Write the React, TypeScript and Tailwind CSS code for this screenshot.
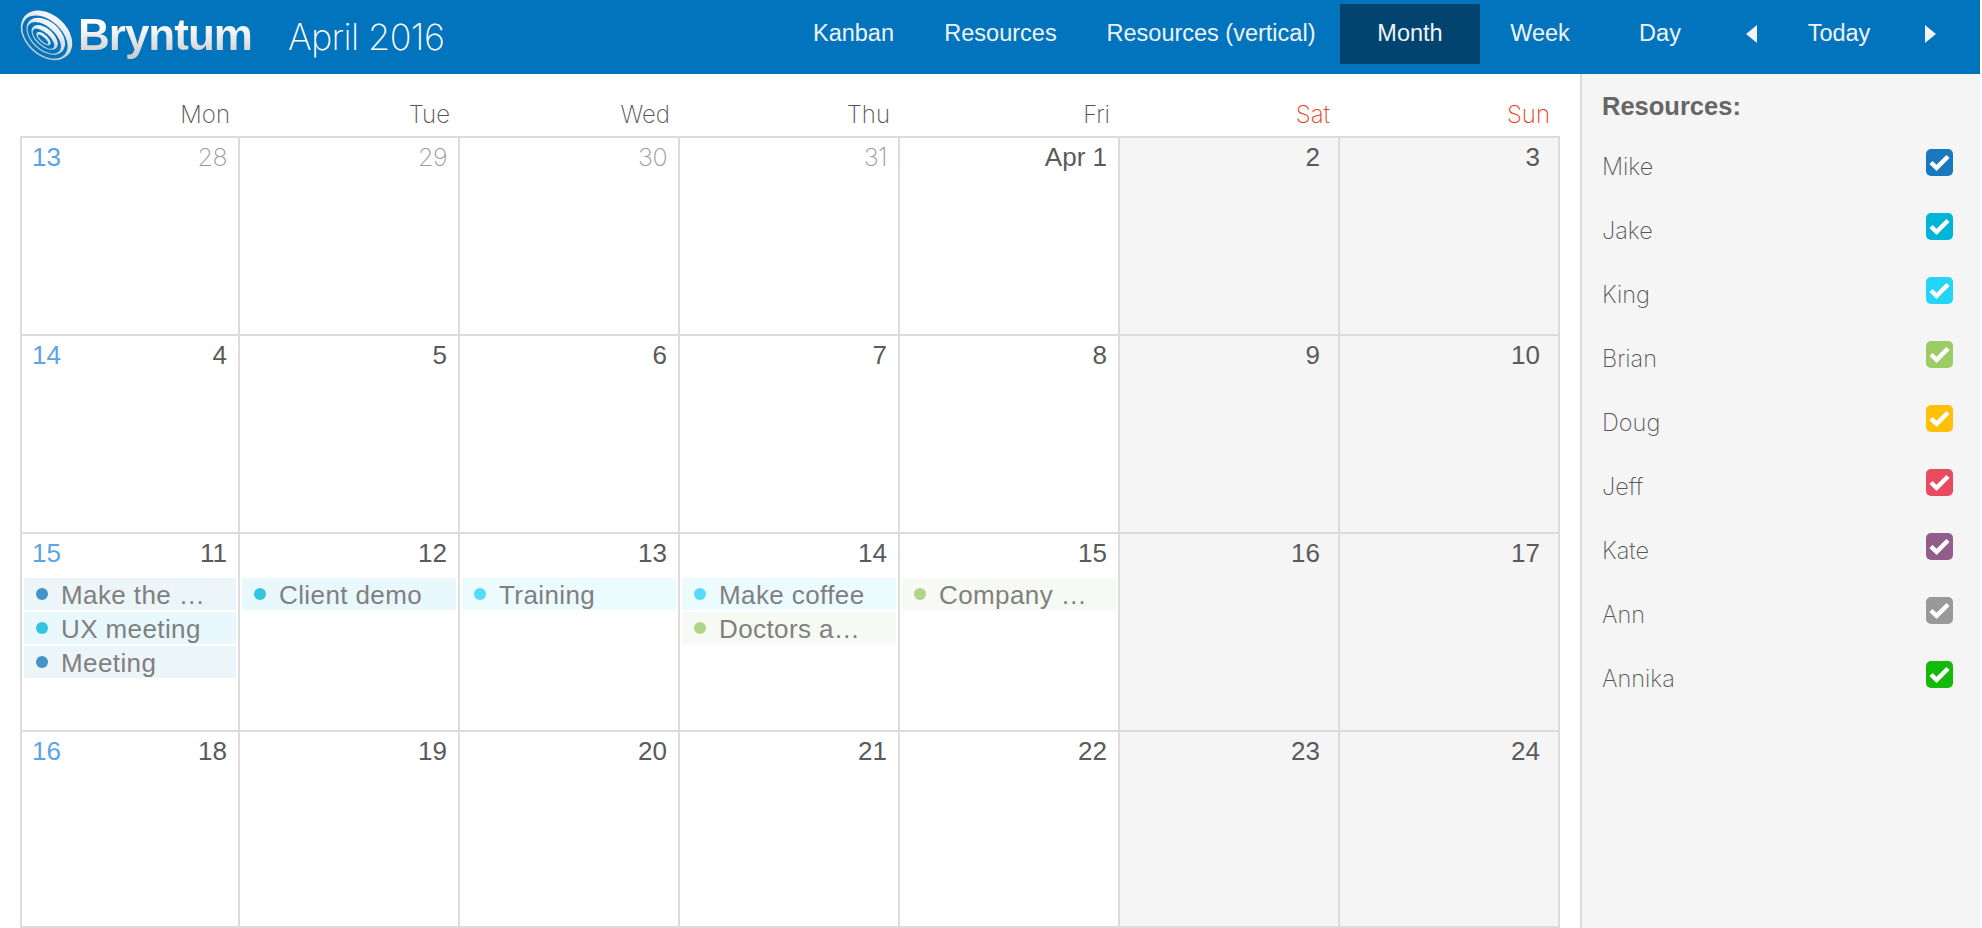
const WEEKS = [
  { week: 13, days: ["28", "29", "30", "31", "Apr 1", "2", "3"] },
  { week: 14, days: ["4", "5", "6", "7", "8", "9", "10"] },
  { week: 15, days: ["11", "12", "13", "14", "15", "16", "17"] },
  { week: 16, days: ["18", "19", "20", "21", "22", "23", "24"] },
];

const DAY_NAMES = ["Mon", "Tue", "Wed", "Thu", "Fri", "Sat", "Sun"];

const BLUE = { dot: "bg-[#4392c8]", bg: "bg-[#ecf5f8]" };
const CYAN = { dot: "bg-[#33c4e0]", bg: "bg-[#e9f8fc]" };
const SKY = { dot: "bg-[#55daf9]", bg: "bg-[#ecfbfe]" };
const GREEN = { dot: "bg-[#b0d489]", bg: "bg-[#f7faf4]" };

// events keyed by "weekIndex-dayIndex"
const EVENTS: Record<string, { title: string; color: { dot: string; bg: string } }[]> = {
  "2-0": [
    { title: "Make the …", color: BLUE },
    { title: "UX meeting", color: CYAN },
    { title: "Meeting", color: BLUE },
  ],
  "2-1": [{ title: "Client demo", color: CYAN }],
  "2-2": [{ title: "Training", color: SKY }],
  "2-3": [
    { title: "Make coffee", color: SKY },
    { title: "Doctors a…", color: GREEN },
  ],
  "2-4": [{ title: "Company …", color: GREEN }],
};

const RESOURCES = [
  { name: "Mike", color: "bg-[#1a78bf]" },
  { name: "Jake", color: "bg-[#00b4d8]" },
  { name: "King", color: "bg-[#25d5f8]" },
  { name: "Brian", color: "bg-[#9ccc65]" },
  { name: "Doug", color: "bg-[#ffc107]" },
  { name: "Jeff", color: "bg-[#e84a5f]" },
  { name: "Kate", color: "bg-[#915e8c]" },
  { name: "Ann", color: "bg-[#999999]" },
  { name: "Annika", color: "bg-[#15b90a]" },
];

function Logo() {
  return (
    <div className="flex items-center">
      <svg width="56" height="56" viewBox="0 0 50 50" className="mt-[-1px] ml-[-3px]">
        <defs>
          <linearGradient id="swirl" x1="0" y1="0" x2="0.3" y2="1">
            <stop offset="0" stopColor="#ffffff" />
            <stop offset="1" stopColor="#bcc6ce" />
          </linearGradient>
        </defs>
        {/* offset ellipses give each ring its crescent shape */}
        <g transform="rotate(42 25 25)" fill="url(#swirl)" fillRule="evenodd">
          <path d="M-1 23a26 18.5 0 1 0 52 0a26 18.5 0 1 0 -52 0ZM1.5 25a23.5 15 0 1 0 47 0a23.5 15 0 1 0 -47 0Z" />
          <path d="M5 24a20 13 0 1 0 40 0a20 13 0 1 0 -40 0ZM7 26a18 9.8 0 1 0 36 0a18 9.8 0 1 0 -36 0Z" />
          <path d="M11 25.5a14 8 0 1 0 28 0a14 8 0 1 0 -28 0ZM13 27a12 5.3 0 1 0 24 0a12 5.3 0 1 0 -24 0Z" />
          <path d="M17 27a8 3.6 0 1 0 16 0a8 3.6 0 1 0 -16 0ZM19 27.6a6 1.8 0 1 0 12 0a6 1.8 0 1 0 -12 0Z" />
        </g>
      </svg>
      <span className="mt-[-4px] ml-[5px] bg-gradient-to-b from-white from-30% to-[#c4c4c4] bg-clip-text font-['Liberation_Sans',sans-serif] text-[44px] leading-[54px] font-bold tracking-[-1px] text-transparent">
        Bryntum
      </span>
    </div>
  );
}

function NavItem({ label, className }: { label: string; className: string }) {
  return <div className={`flex h-[60px] items-center justify-center ${className}`}>{label}</div>;
}

function Header() {
  return (
    <header className="flex h-[74px] w-[1980px] items-center bg-[#0273bd] pl-[20px] text-white">
      <Logo />
      <div className="ml-[36px] font-['Inter',sans-serif] text-[36px] font-extralight tracking-[-0.6px]">April 2016</div>
      <nav className="mb-[6px] ml-auto flex items-center font-['Liberation_Sans',sans-serif] text-[23.5px] text-[#eef4fa]">
        <NavItem label="Kanban" className="w-[131px]" />
        <NavItem label="Resources" className="w-[163px]" />
        <NavItem label="Resources (vertical)" className="w-[258px]" />
        <NavItem label="Month" className="w-[140px] bg-[#02436f]" />
        <NavItem label="Week" className="w-[120px]" />
        <NavItem label="Day" className="w-[120px]" />
        <div className="flex h-[60px] w-[62px] items-center justify-center">
          <div className="h-0 w-0 border-y-[9px] border-r-[11px] border-y-transparent border-r-[#eef4fa]" />
        </div>
        <NavItem label="Today" className="w-[114px]" />
        <div className="flex h-[60px] w-[68px] items-center justify-center">
          <div className="h-0 w-0 border-y-[9px] border-l-[11px] border-y-transparent border-l-[#eef4fa]" />
        </div>
        <div className="w-[16px]" />
      </nav>
    </header>
  );
}

function DayCell({ weekIndex, dayIndex, label, week }: { weekIndex: number; dayIndex: number; label: string; week: number }) {
  const isWeekend = dayIndex >= 5;
  const isOtherMonth = weekIndex === 0 && dayIndex < 4;
  const events = EVENTS[`${weekIndex}-${dayIndex}`] ?? [];

  return (
    <div className={`border-t-2 border-l-2 border-[#dcdcdc] ${isWeekend ? "bg-[#f5f5f5]" : "bg-white"}`}>
      <div className={`flex h-[40px] items-start pt-[2px] text-[26px] leading-[34px] ${isWeekend ? "pr-[18px]" : "pr-[11px]"}`}>
        {dayIndex === 0 && <span className="ml-[10px] text-[#5ba4e5]">{week}</span>}
        <span
          className={`ml-auto ${
            isOtherMonth ? "font-['Inter',sans-serif] text-[25px] font-extralight tracking-[-0.5px] text-[#9a9a9a]" : "text-[#5a5a5a]"
          }`}
        >
          {label}
        </span>
      </div>
      <div className="mt-[4px] flex flex-col gap-[2px] px-[2px]">
        {events.map((ev) => (
          <div key={ev.title} className={`flex h-[32px] items-center pl-[12px] ${ev.color.bg}`}>
            <span className={`h-[12px] w-[12px] rounded-full ${ev.color.dot}`} />
            <span className="mt-[1px] ml-[13px] font-['Liberation_Sans',sans-serif] text-[26px] leading-[32px] tracking-[0.4px] whitespace-nowrap text-[#808080]">
              {ev.title}
            </span>
          </div>
        ))}
      </div>
    </div>
  );
}

function Calendar() {
  return (
    <main className="w-[1580px] shrink-0 pl-[20px]">
      <div className="grid h-[62px] w-[1540px] grid-cols-[218px_repeat(6,220px)] items-end pb-[6px] font-['Inter',sans-serif] text-[24px] leading-[30px] font-extralight">
        {DAY_NAMES.map((name, i) => (
          <div key={name} className={`pr-[8px] text-right ${i >= 5 ? "text-[#e8401c]" : "text-[#555555]"}`}>
            {name}
          </div>
        ))}
      </div>
      <div className="grid h-[792px] w-[1540px] grid-cols-[218px_repeat(6,220px)] grid-rows-[198px_198px_198px_196px] border-r-2 border-b-2 border-[#dcdcdc] font-['Liberation_Sans',sans-serif]">
        {WEEKS.map((row, w) =>
          row.days.map((label, d) => (
            <DayCell key={`${w}-${d}`} weekIndex={w} dayIndex={d} label={label} week={row.week} />
          ))
        )}
      </div>
    </main>
  );
}

function CheckBox({ color }: { color: string }) {
  return (
    <span className={`flex h-[27px] w-[27px] items-center justify-center rounded-[5px] ${color}`}>
      <svg width="27" height="27" viewBox="0 0 27 27" fill="none" stroke="#ffffff" strokeWidth="4.5">
        <path d="M5 13.5l5.6 5.4L22 7.5" />
      </svg>
    </span>
  );
}

function Sidebar() {
  return (
    <aside className="h-[854px] w-[400px] shrink-0 border-l-2 border-[#dcdcdc] bg-[#f5f5f5] pr-[27px] pl-[20px] font-['Inter',sans-serif]">
      <div className="pt-[17px] font-['Liberation_Sans',sans-serif] text-[25.5px] leading-[30px] font-bold text-[#666666]">Resources:</div>
      <div className="mt-[9px]">
        {RESOURCES.map((res) => (
          <div key={res.name} className="flex h-[64px] items-center justify-between">
            <span className="mt-[9px] text-[23.5px] font-extralight text-[#555555]">{res.name}</span>
            <CheckBox color={res.color} />
          </div>
        ))}
      </div>
    </aside>
  );
}

export default function App() {
  return (
    <div className="h-[928px] w-[1982px] overflow-hidden bg-white">
      <Header />
      <div className="flex">
        <Calendar />
        <Sidebar />
      </div>
    </div>
  );
}
